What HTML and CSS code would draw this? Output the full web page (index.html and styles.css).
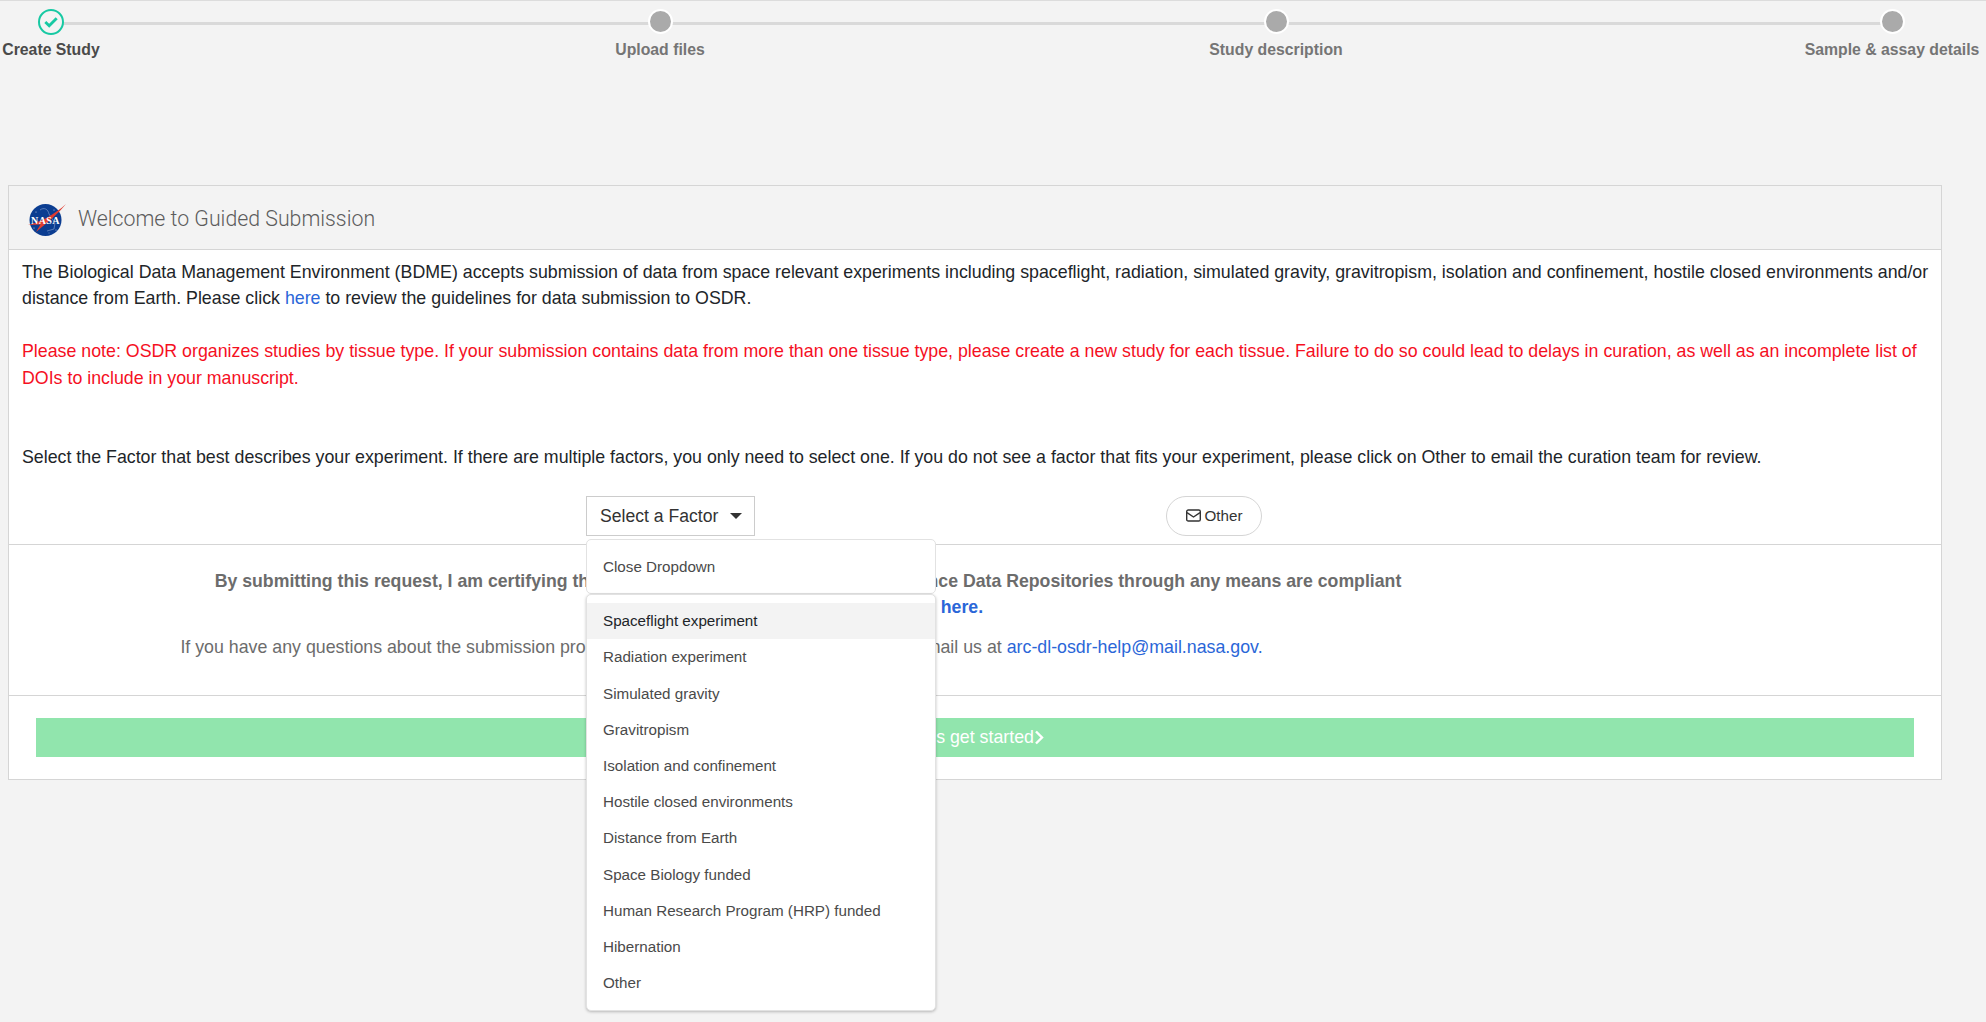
FILE: index.html
```html
<!DOCTYPE html>
<html lang="en">
<head>
<meta charset="utf-8">
<title>Guided Submission</title>
<link rel="stylesheet" href="styles.css">
</head>
<body>
<nav class="stepper">
  <span class="stepper-line"></span>
  <div class="step step-active">
    <span class="dot dot-done"><svg width="14" height="12" viewBox="0 0 14 12"><path d="M1.3 6l3.9 3.8L12.7 2.2" fill="none" stroke="#17c9a3" stroke-width="2.8"/></svg></span>
    <span class="step-label">Create Study</span>
  </div>
  <div class="step"><span class="dot"></span><span class="step-label">Upload files</span></div>
  <div class="step"><span class="dot"></span><span class="step-label">Study description</span></div>
  <div class="step"><span class="dot"></span><span class="step-label">Sample &amp; assay details</span></div>
</nav>

<main class="card">
  <header class="card-header">
    <svg class="logo" width="40" height="34" viewBox="0 0 40 34">
      <circle cx="18.5" cy="17" r="16" fill="#0b3d91"/>
      <path d="M13 7c4-3 8-1 9 4l6 9-1 6-7 2" fill="none" stroke="#8aa5d0" stroke-width=".6"/>
      <g fill="#dfe7f5"><circle cx="9" cy="9" r=".5"/><circle cx="27" cy="7" r=".5"/><circle cx="7" cy="25" r=".5"/><circle cx="29" cy="27" r=".5"/><circle cx="22" cy="30" r=".4"/></g>
      <path d="M1 22C14 19 28 11 39 1 31 11 21 19 9 29l4.500-7.500z" fill="#e03c31"/>
      <text class="logo-text" x="18.500" y="20.500" text-anchor="middle">NASA</text>
    </svg>
    <h1 class="card-title">Welcome to Guided Submission</h1>
  </header>

  <section class="intro">
    <p>The Biological Data Management Environment (BDME) accepts submission of data from space relevant experiments including spaceflight, radiation, simulated gravity, gravitropism, isolation and confinement, hostile closed environments and/or distance from Earth. Please click <a href="#">here</a> to review the guidelines for data submission to OSDR.</p>
    <p class="note">Please note: OSDR organizes studies by tissue type. If your submission contains data from more than one tissue type, please create a new study for each tissue. Failure to do so could lead to delays in curation, as well as an incomplete list of DOIs to include in your manuscript.</p>
    <p class="select-hint">Select the Factor that best describes your experiment. If there are multiple factors, you only need to select one. If you do not see a factor that fits your experiment, please click on Other to email the curation team for review.</p>
    <div class="factor-row">
      <div class="factor-select">
        <button class="select-btn" type="button">Select a Factor<span class="caret"></span></button>
        <div class="menu">
          <div class="menu-close">Close Dropdown</div>
          <ul class="menu-list">
            <li class="menu-item menu-item-active">Spaceflight experiment</li>
            <li class="menu-item">Radiation experiment</li>
            <li class="menu-item">Simulated gravity</li>
            <li class="menu-item">Gravitropism</li>
            <li class="menu-item">Isolation and confinement</li>
            <li class="menu-item">Hostile closed environments</li>
            <li class="menu-item">Distance from Earth</li>
            <li class="menu-item">Space Biology funded</li>
            <li class="menu-item">Human Research Program (HRP) funded</li>
            <li class="menu-item">Hibernation</li>
            <li class="menu-item">Other</li>
          </ul>
        </div>
      </div>
      <button class="other-btn" type="button">
        <svg width="15" height="13" viewBox="0 0 15 13"><rect x=".7" y="1" width="13.600" height="11" rx="1.600" fill="none" stroke="#333" stroke-width="1.400"/><path d="M1 3.600l6.500 4.400L14 3.600" fill="none" stroke="#333" stroke-width="1.400"/></svg>
        Other
      </button>
    </div>
  </section>

  <section class="terms">
    <p class="certify">By submitting this request, I am certifying that all data submitted to NASA Open Science Data Repositories through any means are compliant<br>with the NASA policy outlined in full <a href="#">here.</a></p>
    <p class="contact">If you have any questions about the submission process or require further assistance, please email us at <a href="#">arc-dl-osdr-help@mail.nasa.gov.</a></p>
  </section>

  <footer class="card-footer">
    <button class="start-btn" type="button">Let's get started<svg width="10" height="15" viewBox="0 0 10 15"><path d="M2 1.500l6 6-6 6" fill="none" stroke="#fff" stroke-width="2.400"/></svg></button>
  </footer>
</main>
</body>
</html>
```

FILE: styles.css
```css
* { box-sizing: border-box; }
html, body { margin: 0; padding: 0; }
body {
  background: #f3f3f3;
  color: #212529;
  font-family: "Liberation Sans", Arial, sans-serif;
  font-size: 17.8px;
  line-height: 26.4px;
  height: 1022px;
  overflow: hidden;
}
p { margin: 0; }
a { color: #2a66d8; text-decoration: none; }
button { font-family: inherit; cursor: pointer; }

.stepper {
  position: relative;
  display: grid;
  grid-template-columns: 609px 616px 616px 98px;
  padding: 8px 0 0 2px;
  height: 185px;
  border-top: 1px solid #dcdcdc;
}
.stepper-line {
  position: absolute;
  left: 51px;
  top: 21px;
  width: 1841px;
  height: 3px;
  background: #d9d9d9;
}
.step {
  position: relative;
  display: flex;
  flex-direction: column;
  align-items: center;
  width: 98px;
  white-space: nowrap;
}
.dot {
  width: 25px;
  height: 25px;
  border-radius: 50%;
  background: #aaa;
  border: 2px solid #fff;
}
.dot-done {
  width: 26px;
  height: 26px;
  background: #f4f4f4;
  border: 2.5px solid #17c9a3;
  display: flex;
  align-items: center;
  justify-content: center;
}
.step-label {
  margin-top: 3px;
  font-size: 15.8px;
  font-weight: 700;
  color: #757575;
  line-height: 26px;
}
.step-active .step-label { color: #4a4a4a; margin-top: 2px; }

.card {
  width: 1934px;
  margin-left: 8px;
  height: 595px;
  background: #fff;
  border: 1px solid #d5d5d5;
}
.card-header {
  display: flex;
  align-items: center;
  height: 64px;
  padding: 4px 0 0 18px;
  background: #f3f3f3;
  border-bottom: 1px solid #d5d5d5;
}
.logo { flex: none; }
.logo-text {
  font-family: "Liberation Serif", serif;
  font-size: 10px;
  font-weight: 700;
  letter-spacing: .4px;
  fill: #fff;
}
.card-title {
  margin: 0 0 0 11px;
  font-family: Roboto, "Liberation Sans", sans-serif;
  font-size: 21.3px;
  font-weight: 300;
  color: #5c5c5c;
}

.intro {
  padding: 9px 6px 0 13px;
  height: 295px;
  border-bottom: 1px solid #d5d5d5;
}
.note { margin-top: 26.4px; color: #f5101f; }
.select-hint { margin-top: 52.8px; }
.factor-row {
  display: flex;
  gap: 411px;
  margin-top: 26px;
  padding-left: 564px;
}
.factor-select { position: relative; }
.select-btn {
  display: flex;
  align-items: center;
  width: 169px;
  height: 40px;
  padding: 0 10px 0 13px;
  background: #fff;
  border: 1px solid #ccc;
  font-size: 17.6px;
  color: #333;
  white-space: nowrap;
}
.caret {
  flex: none;
  margin-left: 12px;
  border-top: 6px solid #333;
  border-left: 6px solid transparent;
  border-right: 6px solid transparent;
}
.menu {
  position: absolute;
  left: 0;
  top: 43px;
  width: 350px;
  z-index: 5;
  font-size: 15.2px;
  color: #4a4a4a;
}
.menu-close {
  height: 55px;
  padding: 14px 16px 0;
  background: #fff;
  border: 1px solid #e2e2e2;
  border-radius: 5px;
}
.menu-list {
  list-style: none;
  margin: 0;
  padding: 8px 0 0;
  height: 417px;
  background: #fff;
  border: 1px solid #e2e2e2;
  border-radius: 5px;
  box-shadow: 0 1px 3px rgba(0,0,0,.25);
}
.menu-item {
  height: 36.2px;
  line-height: 36.2px;
  padding: 0 16px;
}
.menu-item-active { background: #f3f3f3; color: #212529; }
.other-btn {
  display: flex;
  align-items: center;
  justify-content: center;
  gap: 4px;
  width: 96px;
  height: 40px;
  padding: 0 0 1px;
  background: #fff;
  border: 1px solid #d5d5d5;
  border-radius: 20px;
  font-size: 15.2px;
  color: #333;
}

.terms {
  height: 151px;
  padding-top: 23px;
  color: #6c6c6c;
  border-bottom: 1px solid #d5d5d5;
  text-align: center;
}
.certify { font-weight: 700; font-size: 17.7px; width: 1598px; }
.contact { margin-top: 13px; width: 1425px; }

.card-footer { padding: 22px 27px; }
.start-btn {
  display: flex;
  align-items: center;
  justify-content: center;
  width: 1878px;
  height: 39px;
  padding-left: 8px;
  border: 0;
  background: #91e5ad;
  color: #fff;
  font-size: 17.8px;
}
```
